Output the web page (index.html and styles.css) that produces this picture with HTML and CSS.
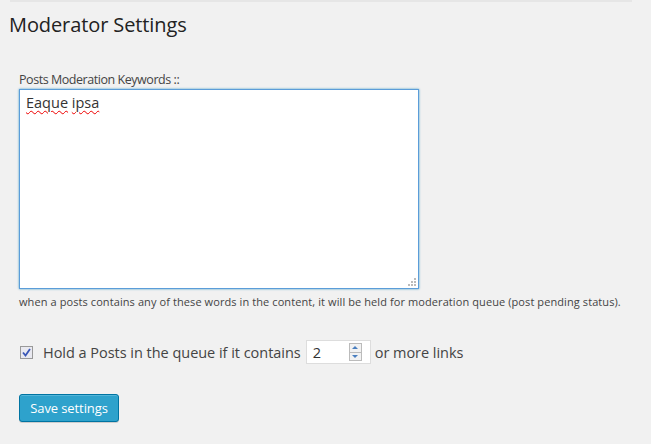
FILE: index.html
```html
<!DOCTYPE html>
<html>
<head>
<meta charset="utf-8">
<link rel="stylesheet" href="styles.css">
</head>
<body>
<div class="wrap">
  <div class="topline"></div>
  <h2 class="title">Moderator Settings</h2>
  <form class="form">
    <label class="field-label" for="kw">Posts Moderation Keywords ::</label>
    <div class="ta-box">
      <div class="ta" id="kw"><span class="spell">Eaque</span> <span class="spell">ipsa</span></div>
      <svg class="grip" width="8" height="8" viewBox="0 0 8 8"><g fill="#bbb"><rect x="6" y="0" width="2" height="2"/><rect x="3" y="3" width="2" height="2"/><rect x="6" y="3" width="2" height="2"/><rect x="0" y="6" width="2" height="2"/><rect x="3" y="6" width="2" height="2"/><rect x="6" y="6" width="2" height="2"/></g></svg>
    </div>
    <p class="desc">when a posts contains any of these words in the content, it will be held for moderation queue (post pending status).</p>
    <div class="row">
      <span class="cb"><svg width="9" height="9" viewBox="0 0 9 9"><path d="M1 4.5 L3.5 7.5 L8 1" fill="none" stroke="#3a57b7" stroke-width="1.8"/></svg></span>
      <span class="row-text">Hold a Posts in the queue if it contains</span>
      <span class="num"><span class="num-val">2</span><span class="spin"><span class="arr up"></span><span class="arr down"></span></span></span>
      <span class="row-text">or more links</span>
    </div>
    <div class="btn-row"><span class="btn">Save settings</span></div>
  </form>
</div>
</body>
</html>
```
FILE: styles.css
```css
html, body { margin: 0; padding: 0; }
body {
  background: #f1f1f1;
  font-family: "Open Sans", "Liberation Sans", sans-serif;
  color: #444;
  width: 651px;
  height: 444px;
  overflow: hidden;
}
.wrap { padding: 0 19px 0 9px; }
.topline { height: 2px; background: #e6e6e6; margin-left: 1px; margin-right: 0; }
.title {
  margin: 10px 0 0 0;
  font-size: 20px;
  font-weight: 400;
  color: #222;
  line-height: 26px;
  letter-spacing: -0.1px;
}
.form { padding-left: 10px; padding-top: 32px; }
.field-label {
  display: block;
  font-size: 12.5px;
  line-height: 19px;
  color: #444;
  letter-spacing: -0.45px;
}
.ta-box {
  position: relative;
  width: 398px;
  height: 198px;
  border: 1px solid #5b9dd9;
  box-shadow: 0 0 2px rgba(30,140,190,.8);
  background: #fff;
  margin-top: 0;
}
.ta {
  padding: 3px 6px;
  font-size: 14.5px;
  line-height: 20px;
  color: #333;
  letter-spacing: 0;
}
.spell { text-decoration: underline wavy #e00; text-decoration-thickness: 1px; text-underline-offset: 2px; }
.grip { position: absolute; right: 2px; bottom: 2px; }
.desc {
  margin: 5px 0 0 0;
  font-size: 11px;
  line-height: 16px;
  color: #444;
  letter-spacing: 0.09px;
}
.row { display: flex; align-items: center; margin-top: 30px; height: 24px; }
.cb {
  width: 11px; height: 11px;
  border: 1px solid #999;
  background: #e9e9f0;
  display: flex; align-items: center; justify-content: center;
  margin-left: 1px;
}
.row-text { font-size: 14.5px; color: #444; letter-spacing: -0.03px; }
.cb + .row-text { margin-left: 10px; }
.num {
  display: flex; align-items: center;
  width: 63px; height: 22px;
  border: 1px solid #ddd;
  background: #fff;
  margin: 0 4px 0 5px;
  box-sizing: content-box;
}
.num-val { flex: 1; font-size: 14.5px; color: #333; padding-left: 6px; }
.spin {
  display: flex; flex-direction: column;
  width: 11px; height: 16px;
  border: 1px solid #bbb;
  margin-right: 8px;
  background: #f2f2f2;
}
.arr { flex: 1; display: flex; align-items: center; justify-content: center; }
.arr.up { border-bottom: 1px solid #bbb; }
.arr.up::before { content: ""; border: 3px solid transparent; border-bottom: 3px solid #4a7fbf; border-top: 0; }
.arr.down::before { content: ""; border: 3px solid transparent; border-top: 3px solid #4a7fbf; border-bottom: 0; }
.btn-row { margin-top: 30px; }
.btn {
  display: inline-block;
  width: 98px; height: 26px;
  box-sizing: content-box;
  line-height: 26px;
  text-align: center;
  background: #2ea2cc;
  border: 1px solid #0074a2;
  border-radius: 3px;
  box-shadow: inset 0 1px 0 rgba(120,200,230,.5), 0 1px 0 rgba(0,0,0,.15);
  color: #fff;
  font-size: 13px;
  letter-spacing: -0.1px;
}
```
